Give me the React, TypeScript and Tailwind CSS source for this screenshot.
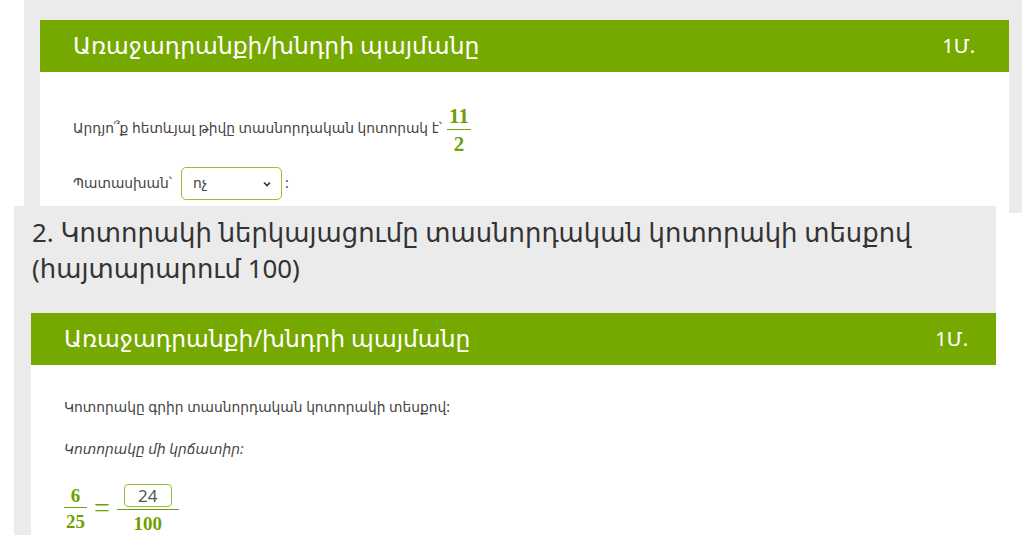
import React from 'react';

const font = { fontFamily: '"Noto Sans", "DejaVu Sans", sans-serif' };
const mathFont = { fontFamily: '"Liberation Serif", "DejaVu Serif", serif' };

const Fraction: React.FC<{ top: React.ReactNode; bottom: string; size?: string; extra?: string }> = ({ top, bottom, size = 'text-[21px]', extra = '' }) => (
  <span className={`inline-flex flex-col items-center align-middle font-bold text-[#6f9f00] leading-none ${size} ${extra}`} style={mathFont}>
    <span className="px-[2px] pb-[2px]">{top}</span>
    <span className="w-full border-t border-[#6f9f00]" />
    <span className="px-[2px] pt-[4px]">{bottom}</span>
  </span>
);

const CardHeader: React.FC<{ pr: string }> = ({ pr }) => (
  <div className={`h-[52px] bg-[#76a900] flex items-center justify-between pl-[33px] ${pr} text-white text-[23.4px]`}>
    <span>Առաջադրանքի/խնդրի պայմանը</span>
    <span className="text-[20px]">1Մ.</span>
  </div>
);

export default function App() {
  return (
    <div className="w-[1022px] h-[535px] bg-white overflow-hidden text-[#333]" style={font}>
      {/* first task */}
      <div className="ml-[24px] h-[213px] bg-[#ebebeb] pt-[20px] pl-[16px] pr-[13px] overflow-hidden">
        <div className="bg-white h-full">
          <CardHeader pr="pr-[34px]" />
          <div className="pl-[33px] pt-[29px] text-[13.8px] text-[#444]">
            <div className="flex items-center gap-[5px]">
              <span>Արդյո՞ք հետևյալ թիվը տասնորդական կոտորակ է՝</span>
              <Fraction top="11" bottom="2" extra="mt-[5px]" />
            </div>
            <div className="flex items-center mt-[12px]">
              <span>Պատասխան՝</span>
              <div className="ml-[9px] w-[101px] h-[33px] border border-[#8fc23a] rounded-[5px] flex items-center justify-between pl-[11px] pr-[9px]">
                <span>ոչ</span>
                <svg width="10" height="10" viewBox="0 0 10 10" fill="none" stroke="#333" strokeWidth="1.6">
                  <path d="M2 3.5 L5 6.5 L8 3.5" />
                </svg>
              </div>
              <span className="ml-[3px]">:</span>
            </div>
          </div>
        </div>
      </div>

      {/* second task, overlapping */}
      <div className="relative z-10 -mt-[7px] ml-[14px] w-[982px] h-[336px] bg-[#ebebeb]">
        <h2 className="pl-[18px] pt-[8px] text-[25.9px] leading-[36px] text-[#333]">
          2. Կոտորակի ներկայացումը տասնորդական կոտորակի տեսքով <br />(հայտարարում 100)
        </h2>
        <div className="ml-[17px] mt-[27px] bg-white h-full">
          <CardHeader pr="pr-[28px]" />
          <div className="pl-[33px] pt-[32px] text-[13.8px] text-[#444]">
            <p>Կոտորակը գրիր տասնորդական կոտորակի տեսքով:</p>
            <p className="italic mt-[21px]">Կոտորակը մի կրճատիր:</p>
            <div className="flex items-center mt-[25px] gap-[7px]">
              <Fraction top="6" bottom="25" size="text-[19px]" />
              <span className="text-[28px] text-[#6f9f00] leading-none pb-[2px]" style={mathFont}>=</span>
              <span className="inline-flex flex-col items-center leading-none">
                <span className="mx-[7px] mb-[2px] w-[48px] h-[23px] border border-[#8fc23a] rounded-[4px] flex items-center justify-center text-[17px] text-[#555] font-normal" style={font}>24</span>
                <span className="w-full border-t border-[#6f9f00]" />
                <span className="pt-[4px] text-[19px] font-bold text-[#6f9f00]" style={mathFont}>100</span>
              </span>
            </div>
          </div>
        </div>
      </div>
    </div>
  );
}
